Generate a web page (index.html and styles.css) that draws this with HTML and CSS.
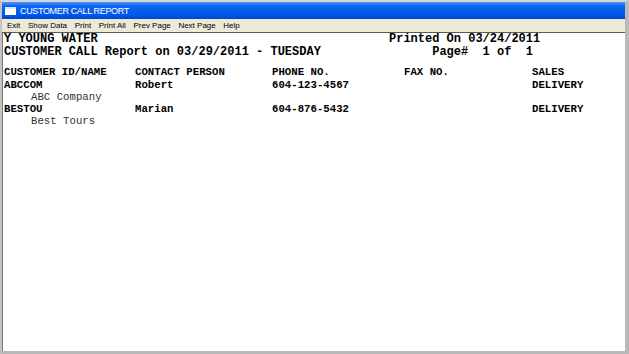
FILE: index.html
```html
<!DOCTYPE html>
<html lang="en">
<head>
    <meta charset="UTF-8">
    <title>Customer Call Report</title>
    <link rel="stylesheet" href="styles.css">
</head>
<body>
    <div class="frame">
        <!-- Title bar -->
        <div class="titlebar">
            <span class="app-icon"></span>
            <span class="title">CUSTOMER CALL REPORT</span>
        </div>

        <!-- Menu -->
        <ul class="menu">
            <li>Exit</li>
            <li>Show Data</li>
            <li>Print</li>
            <li>Print All</li>
            <li>Prev Page</li>
            <li>Next Page</li>
            <li>Help</li>
        </ul>

        <!-- Report page -->
        <div class="report">
            <div class="report-head">
                <div class="head-left">
                    <p>Y YOUNG WATER</p>
                    <p>CUSTOMER CALL Report on 03/29/2011 - TUESDAY</p>
                </div>
                <div class="head-right">
                    <p>Printed On 03/24/2011</p>
                    <p>      Page#  1 of  1</p>
                </div>
            </div>

            <div class="table">
                <div class="row head-row">
                    <span>CUSTOMER ID/NAME</span>
                    <span>CONTACT PERSON</span>
                    <span>PHONE NO.</span>
                    <span>FAX NO.</span>
                    <span>SALES</span>
                </div>

                <div class="row">
                    <span>ABCCOM</span>
                    <span>Robert</span>
                    <span>604-123-4567</span>
                    <span></span>
                    <span>DELIVERY</span>
                </div>
                <div class="cust-name">ABC Company</div>

                <div class="row">
                    <span>BESTOU</span>
                    <span>Marian</span>
                    <span>604-876-5432</span>
                    <span></span>
                    <span>DELIVERY</span>
                </div>
                <div class="cust-name">Best Tours</div>
            </div>
        </div>
    </div>
</body>
</html>
```

FILE: styles.css
```css
/* Reset */
* {
    margin: 0;
    padding: 0;
    box-sizing: border-box;
}

body {
    background-color: #ffffff;
}

/* Window frame */
.frame {
    width: 629px;
    height: 354px;
    display: flex;
    flex-direction: column;
    border-left: 2px solid #c4c4c4;
    border-top: 2px solid #d4d4d4;
    border-right: 4px solid #b9b9b9;
    border-bottom: 3px solid #b9b9b9;
    background-color: #ffffff;
}

/* Title bar */
.titlebar {
    height: 17px;
    display: flex;
    align-items: center;
    gap: 4px;
    padding-left: 3px;
    background: linear-gradient(#4a95fc, #0c62f3 25%, #0058ea 75%, #0046cc);
}

.app-icon {
    width: 11px;
    height: 8px;
    background-color: #ffffff;
    border-top: 2px solid #d8e6ff;
}

.title {
    font-family: "Liberation Sans", Arial, sans-serif;
    font-size: 9px;
    letter-spacing: -0.35px;
    color: #ffffff;
}

/* Menu bar */
.menu {
    list-style: none;
    height: 14px;
    display: flex;
    align-items: center;
    gap: 7.6px;
    padding-left: 5px;
    background-color: #ece9d8;
    border-bottom: 1px solid #5a5a5a;
}

.menu li {
    font-family: "Liberation Sans", Arial, sans-serif;
    font-size: 8px;
    color: #000000;
}

/* Report */
.report {
    flex: 1;
    border-left: 1px solid #7a7a7a;
    padding-left: 1px;
    font-family: "Liberation Mono", "Courier New", monospace;
    color: #000000;
}

.report-head {
    display: flex;
    font-size: 12px;
    font-weight: bold;
    line-height: 13px;
}

.head-left {
    width: 385px;
}

.head-right p {
    white-space: pre;
}

.table {
    margin-top: 7px;
    font-size: 10.7px;
    line-height: 12px;
}

.row {
    display: grid;
    grid-template-columns: 131px 137px 132px 128px auto;
    font-weight: bold;
}

.head-row {
    margin-bottom: 1px;
}

.cust-name {
    padding-left: 27px;
    color: #333333;
}
```
